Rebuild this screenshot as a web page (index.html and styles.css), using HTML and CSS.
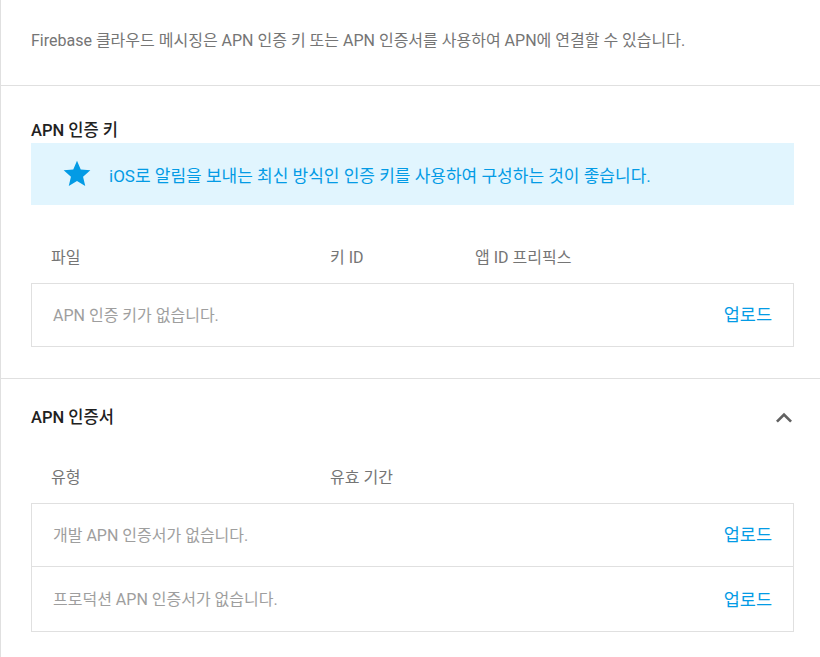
FILE: index.html
```html
<!DOCTYPE html>
<html lang="ko">
<head>
    <meta charset="UTF-8">
    <title>APN 설정</title>
    <link rel="stylesheet" href="styles.css">
</head>
<body>
    <div class="card">
        <section class="intro">
            Firebase 클라우드 메시징은 APN 인증 키 또는 APN 인증서를 사용하여 APN에 연결할 수 있습니다.
        </section>

        <section class="block block-key">
            <h2 class="block-title">APN 인증 키</h2>
            <div class="tip">
                <svg class="tip-icon" viewBox="0 0 24 24"><path d="M12 17.27L18.18 21l-1.64-7.03L22 9.24l-7.19-.61L12 2 9.19 8.63 2 9.24l5.46 4.73L5.82 21z"/></svg>
                <span>iOS로 알림을 보내는 최신 방식인 인증 키를 사용하여 구성하는 것이 좋습니다.</span>
            </div>
            <div class="cols cols-head">
                <span class="col-a">파일</span>
                <span class="col-b">키 ID</span>
                <span class="col-c">앱 ID 프리픽스</span>
            </div>
            <div class="list">
                <div class="row">
                    <span class="empty">APN 인증 키가 없습니다.</span>
                    <a class="upload" href="#">업로드</a>
                </div>
            </div>
        </section>

        <section class="block block-cert">
            <div class="title-bar">
                <h2 class="block-title">APN 인증서</h2>
                <svg class="chevron" viewBox="0 0 24 24"><path d="M12 8l-6 6 1.41 1.41L12 10.83l4.59 4.58L18 14z"/></svg>
            </div>
            <div class="cols cols-head cols-cert">
                <span class="col-a">유형</span>
                <span class="col-b">유효 기간</span>
            </div>
            <div class="list">
                <div class="row">
                    <span class="empty">개발 APN 인증서가 없습니다.</span>
                    <a class="upload" href="#">업로드</a>
                </div>
                <div class="row">
                    <span class="empty">프로덕션 APN 인증서가 없습니다.</span>
                    <a class="upload" href="#">업로드</a>
                </div>
            </div>
        </section>
    </div>
</body>
</html>
```

FILE: styles.css
```css
body { margin: 0; overflow: hidden; background: #fff; font-family: Roboto, "Noto Sans CJK KR", sans-serif; color: #212121; }
.card { width: 824px; box-sizing: border-box; border-left: 1px solid #e0e0e0; }
.intro { padding: 31px 30px 34px; font-size: 16px; line-height: 20px; color: #757575; border-bottom: 1px solid #e0e0e0; }
.block { padding: 0 30px; }
.block-key { padding-top: 34px; padding-bottom: 31px; border-bottom: 1px solid #e0e0e0; }
.block-cert { padding-top: 27px; padding-bottom: 30px; }
.block-title { margin: 0; font-size: 16.5px; line-height: 22px; font-weight: 500; color: #212121; }
.title-bar { display: flex; align-items: center; justify-content: space-between; height: 24px; }
.chevron { width: 32px; height: 32px; fill: #616161; margin-right: -6px; }
.tip { display: flex; align-items: center; height: 62px; margin-top: 1px; padding-left: 30px; background: #e1f5fe; color: #039be5; font-size: 17px; }
.tip-icon { width: 32px; height: 32px; fill: #039be5; margin-right: 16px; }
.cols { display: flex; padding: 0 20px; font-size: 16px; line-height: 20px; color: #757575; }
.cols-head { padding-top: 43px; padding-bottom: 15px; }
.cols-cert { padding-top: 38px; }
.col-a { width: 279px; }
.col-b { width: 145px; }
.list { border: 1px solid #e0e0e0; }
.row { display: flex; align-items: center; justify-content: space-between; height: 62px; padding: 0 21px 3px 21px; box-sizing: border-box; }
.row + .row { border-top: 1px solid #e0e0e0; height: 65px; padding-bottom: 2px; }
.empty { font-size: 16px; color: #9e9e9e; }
.upload { font-size: 17.5px; color: #039be5; text-decoration: none; }
```
